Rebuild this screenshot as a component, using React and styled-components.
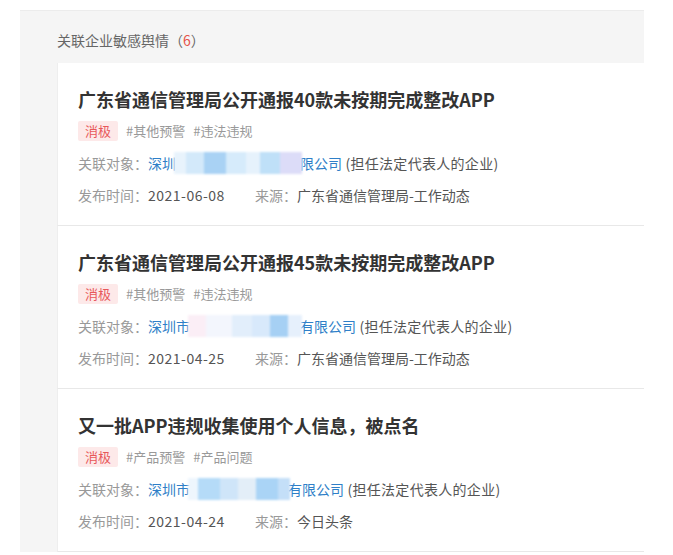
import React from 'react';
import styled, { createGlobalStyle } from 'styled-components';

const GlobalStyle = createGlobalStyle`
	body {
		margin: 0;
		background: #ffffff;
		font-family: "Microsoft YaHei", "Noto Sans CJK SC", "Noto Sans", sans-serif;
	}
`;

const NEWS = [
	{
		title: '广东省通信管理局公开通报40款未按期完成整改APP',
		tags: ['#其他预警', '#违法违规'],
		head: '深圳',
		tail: '限公司',
		blur: [
			['#e8f3fc', 12],
			['#d3e9fa', 18],
			['#a9d2f4', 22],
			['#d6ebfb', 20],
			['#e6f2fc', 14],
			['#bfe0f8', 20],
			['#dcdcf8', 22],
		],
		date: '2021-06-08',
		source: '广东省通信管理局-工作动态',
	},
	{
		title: '广东省通信管理局公开通报45款未按期完成整改APP',
		tags: ['#其他预警', '#违法违规'],
		head: '深圳市',
		tail: '有限公司',
		blur: [
			['#fbeef6', 18],
			['#f3f6fd', 26],
			['#e2eefb', 20],
			['#d8e9fb', 18],
			['#a6d0f4', 18],
			['#e6f0fc', 14],
		],
		date: '2021-04-25',
		source: '广东省通信管理局-工作动态',
	},
	{
		title: '又一批APP违规收集使用个人信息，被点名',
		tags: ['#产品预警', '#产品问题'],
		head: '深圳市',
		tail: '有限公司',
		blur: [
			['#eef6fd', 10],
			['#b5dbf8', 22],
			['#cfe5f9', 18],
			['#e3eef8', 18],
			['#aad4f6', 22],
			['#c4dff8', 12],
		],
		date: '2021-04-24',
		source: '今日头条',
	},
];

export default function App() {
	return (
		<>
			<GlobalStyle />
			<Panel>
				<Header>
					关联企业敏感舆情（<Count>6</Count>）
				</Header>
				{NEWS.map((item) => (
					<Card key={item.title}>
						<Title>{item.title}</Title>
						<TagRow>
							<Badge>消极</Badge>
							{item.tags.map((t) => (
								<Tag key={t}>{t}</Tag>
							))}
						</TagRow>
						<MetaRow>
							<Label>关联对象：</Label>
							<Link>
								{item.head}
								<Redacted>
									{item.blur.map(([c, w], i) => (
										<Patch key={i} $color={c} $width={w} />
									))}
								</Redacted>
								{item.tail}
							</Link>
							<Value $wide>&nbsp;(担任法定代表人的企业)</Value>
						</MetaRow>
						<MetaRow>
							<Label>发布时间：</Label>
							<Value $digits>{item.date}</Value>
							<Spacer />
							<Label>来源：</Label>
							<Value>{item.source}</Value>
						</MetaRow>
					</Card>
				))}
			</Panel>
		</>
	);
}

const Panel = styled.div`
	margin: 10px 0 0 20px;
	width: 624px;
	box-sizing: border-box;
	background: #f5f5f5;
	border-top: 1px solid #ececec;
	padding-left: 37px;
`;

const Header = styled.div`
	height: 52px;
	box-sizing: border-box;
	padding-top: 19px;
	font-size: 14px;
	line-height: 20px;
	color: #666666;
`;

const Count = styled.span`
	color: #e5534b;
`;

const Card = styled.div`
	background: #ffffff;
	border-left: 1px solid #eeeeee;
	border-bottom: 1px solid #e8e8e8;
	padding: 23px 20px 20px;
	display: flex;
	flex-direction: column;
`;

const Title = styled.div`
	font-size: 18px;
	line-height: 26px;
	font-weight: bold;
	color: #333333;
`;

const TagRow = styled.div`
	display: flex;
	align-items: center;
	gap: 10px;
	margin-top: 9px;
	height: 20px;
`;

const Badge = styled.span`
	background: #fde9e9;
	color: #e8585a;
	font-size: 13px;
	line-height: 20px;
	padding: 0 7px;
	border-radius: 2px;
`;

const Tag = styled.span`
	color: #999999;
	font-size: 13px;
	line-height: 20px;
	margin-left: -2px;
`;

const MetaRow = styled.div`
	display: flex;
	align-items: center;
	margin-top: 12px;
	height: 20px;
	font-size: 14px;
	line-height: 20px;
	white-space: nowrap;
`;

const Label = styled.span`
	color: #999999;
`;

const Value = styled.span`
	color: #555555;
	letter-spacing: ${(p) => (p.$digits ? '0.5px' : p.$wide ? '0.3px' : '0')};
`;

const Link = styled.span`
	display: inline-flex;
	align-items: center;
	color: #2f7fc8;
`;

const Redacted = styled.span`
	display: inline-flex;
	height: 22px;
	margin: 0 -2px;
	filter: blur(1px);
`;

const Patch = styled.span`
	display: inline-block;
	width: ${(p) => p.$width}px;
	height: 100%;
	background: ${(p) => p.$color};
`;

const Spacer = styled.span`
	width: 30px;
`;
